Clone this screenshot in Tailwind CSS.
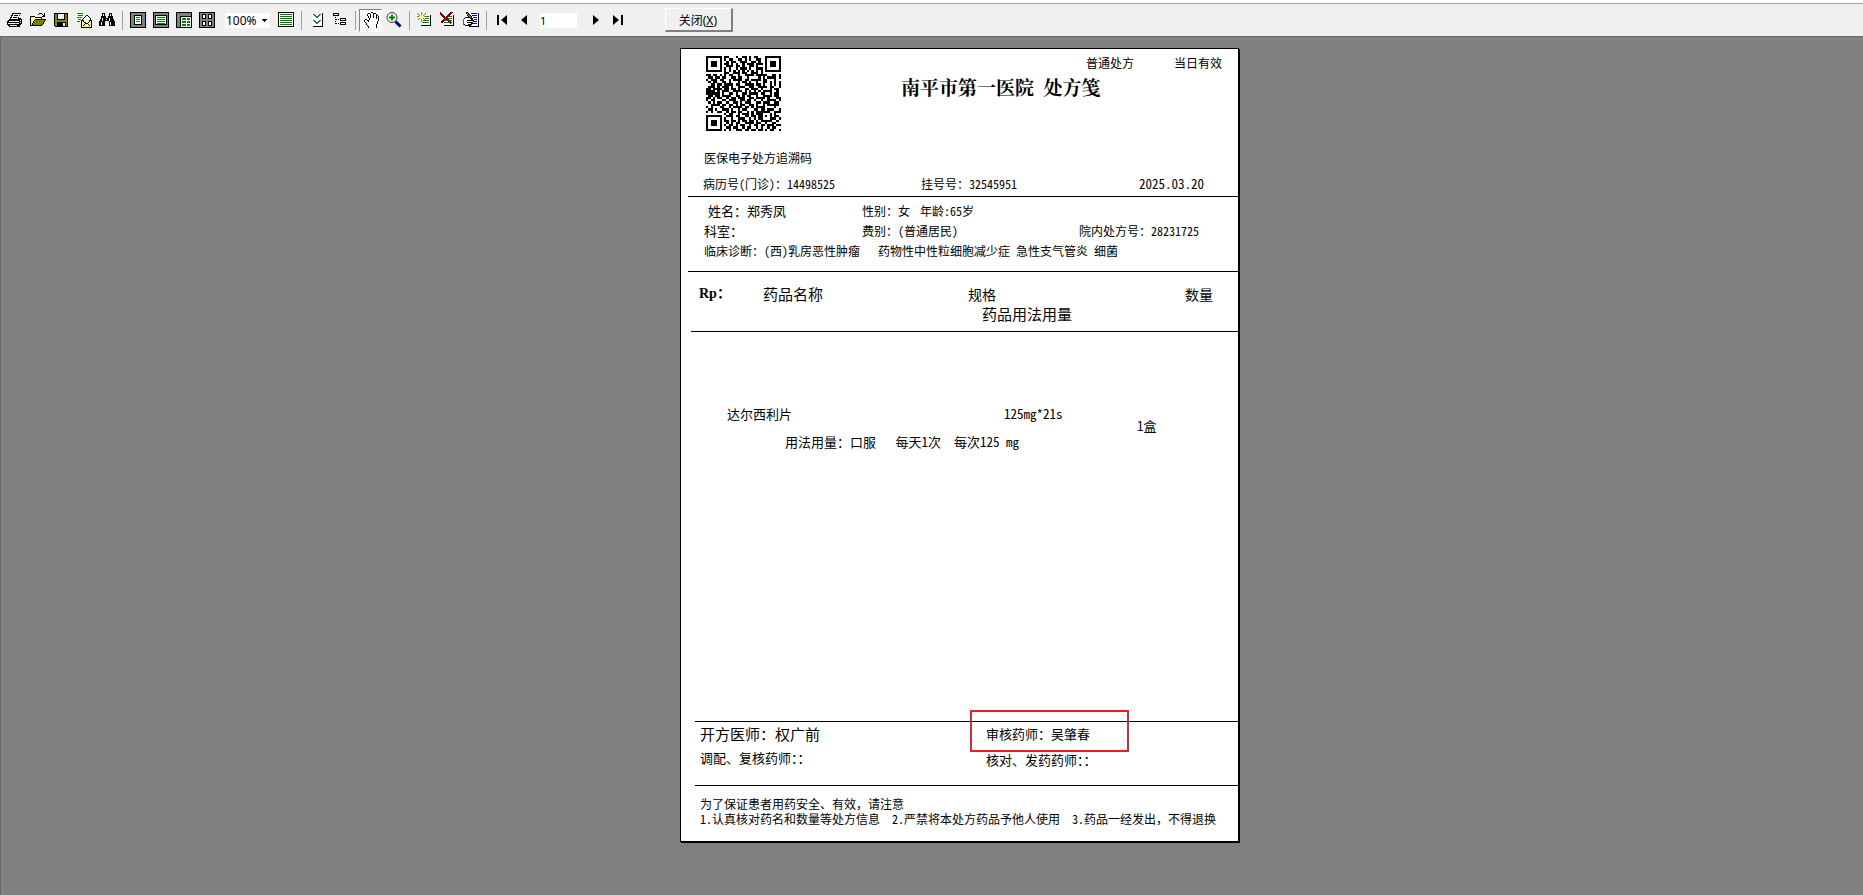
<!DOCTYPE html>
<html lang="zh-CN">
<head>
  <meta charset="UTF-8" />
  <meta name="viewport" content="width=device-width, initial-scale=1.0" />
  <title>处方笺 - 打印预览</title>
  <script src="https://cdn.jsdelivr.net/npm/@tailwindcss/browser@4"></script>
</head>
<body class="min-h-screen flex flex-col bg-[#808080] text-black font-['Noto_Sans_Mono_CJK_SC','Noto_Sans_CJK_SC',monospace]">

  <!-- Toolbar -->
  <header class="bg-white pt-[3px]">
    <div class="flex items-center h-[34px] pl-[3px] bg-[#f0f0f0] border-t border-t-[#a0a0a0] border-b border-b-[#696969]">
      <button aria-label="打印" class="w-[23px] h-[23px] pl-1">
        <svg class="size-4" viewBox="0 0 16 16" shape-rendering="crispEdges">
          <path d="M5 1h9v1h-1v2h-1v2h2v1h1v5h-1v1h-1v2H2v-1H1v-1H0V9h1V8h1V7h1V5h1V3h1z" fill="#000"/>
          <path d="M6 2h7v1h-1v2h-1v2H4V6h1V4h1zM2 9h10v1H2zM1 11h11v1H1zM13 8h1v1h-1zM13 10h1v1h-1zM3 13h7v1H3z" fill="#fff"/>
          <path d="M7 3h4v1H7zM6 5h4v1H6z" fill="#000"/>
          <path d="M8 11h2v1H8z" fill="#e0e000"/>
        </svg>
      </button>
      <button aria-label="打开" class="w-[23px] h-[23px] pl-1">
        <svg class="size-4" viewBox="0 0 16 16" shape-rendering="crispEdges">
          <path d="M0 4h4l1 1h6v3H5l-4 6H0z" fill="#ffff80"/>
          <path d="M.5 14V4.500h4l1 1h6v2" fill="none" stroke="#000"/>
          <path d="M1 14l4-6h11l-4 6z" fill="#808000"/>
          <path d="M5 7h11v1H5zM1 13h11v1H1zM4 8h1v1H4zM3 9h1v2H3zM2 11h1v2H2zM14 9h1v1h-1zM13 10h1v2h-1zM12 12h1v1h-1z" fill="#000"/>
          <path d="M8 2h1v1H8zM9 1h3v1H9zM12 2h1v1h-1zM14 1h1v4h-3V4h1V3h1z" fill="#000"/>
        </svg>
      </button>
      <button aria-label="保存" class="w-[23px] h-[23px] pl-1">
        <svg class="size-4" viewBox="0 0 16 16" shape-rendering="crispEdges">
          <path d="M1 1h14v14H2l-1-1z" fill="#000"/>
          <path d="M2 2h12v12H2z" fill="#808000"/>
          <path d="M4 1h8v7H4z" fill="#000"/>
          <path d="M5 2h6v5H5z" fill="#f0f0f0"/>
          <path d="M4 10h9v5H4z" fill="#000"/>
          <path d="M10 11h2v3h-2z" fill="#fff"/>
        </svg>
      </button>
      <button aria-label="发送邮件" class="w-[23px] h-[23px] pl-1">
        <svg class="size-4" viewBox="0 0 16 16" shape-rendering="crispEdges">
          <path d="M0 0h10v11H0z" fill="#fff"/>
          <path d="M1 1.500h6M2 3.500h5M1 5.500h5M2 7.500h3M1 9.500h3" stroke="#008000"/>
          <path d="M10 3h2v1h1v1h1v1h1v2h1v8H5V8h1V7h1V6h1V5h1V4h1z" fill="#000"/>
          <path d="M10 4h2v1h1v1h1v2h-1v2h-1v1h-2v-1H8V8H7V7h1V6h1V5h1z" fill="#fff"/>
          <path d="M6 9h1v1h1v1h1v1h3v-1h1v-1h1V9h1v6H6z" fill="#ffff80"/>
          <path d="M7 13h1v1H7zM8 12h1v1H8zM12 12h1v1h-1zM13 13h1v1h-1z" fill="#000"/>
        </svg>
      </button>
      <button aria-label="查找" class="w-[23px] h-[23px] pl-1">
        <svg class="size-4" viewBox="0 0 16 16" shape-rendering="crispEdges">
          <path d="M3 1h3v3h1v2h2V4h1V1h3v3h1v3h1v2h1v5h-6V9H6v5H0V9h1V7h1V4h1z" fill="#000"/>
          <path d="M4 2h1v2H4zM11 2h1v2h-1zM3 6h1v3H3zM10 6h1v3h-1zM2 10h1v3H2zM11 10h1v3h-1zM7 7h1v1H7z" fill="#fff"/>
        </svg>
      </button>

      <div class="w-2 h-[19px] pl-1"><div class="w-px h-full bg-[#a0a0a0]"></div></div>

      <button aria-label="整页" class="w-[23px] h-[23px] pl-1">
        <svg class="size-4" viewBox="0 0 16 16" shape-rendering="crispEdges">
          <rect x=".5" y=".5" width="15" height="15" rx="1" fill="#808080" stroke="#000"/>
          <rect x="4.500" y="3.500" width="7" height="9" fill="#fff" stroke="#000"/>
          <path d="M6 5.500h4M6 7.500h4M6 9.500h4" stroke="#008000"/>
        </svg>
      </button>
      <button aria-label="页宽" class="w-[23px] h-[23px] pl-1">
        <svg class="size-4" viewBox="0 0 16 16" shape-rendering="crispEdges">
          <rect x=".5" y=".5" width="15" height="15" rx="1" fill="#808080" stroke="#000"/>
          <rect x="2.500" y="3.500" width="11" height="9" fill="#fff" stroke="#000"/>
          <path d="M4 5.500h8M4 7.500h8M4 9.500h8M4 11.500h8" stroke="#008000"/>
        </svg>
      </button>
      <button aria-label="双页" class="w-[23px] h-[23px] pl-1">
        <svg class="size-4" viewBox="0 0 16 16" shape-rendering="crispEdges">
          <rect x=".5" y=".5" width="15" height="15" rx="1" fill="#808080" stroke="#000"/>
          <path d="M4.500 15V4.500H15" fill="#fff" stroke="#000"/>
          <path d="M5 5h10v10H5z" fill="#fff"/>
          <path d="M6 6h4v2H6zM11 6h3v2h-3zM6 9h4v2H6zM11 9h3v2h-3zM6 12h4v2H6zM11 12h3v2h-3z" fill="#008000"/>
        </svg>
      </button>
      <button aria-label="多页" class="w-[23px] h-[23px] pl-1">
        <svg class="size-4" viewBox="0 0 16 16" shape-rendering="crispEdges">
          <rect x=".5" y=".5" width="15" height="15" rx="1" fill="#808080" stroke="#000"/>
          <path d="M3.500 2.500h3v4h-3zM9.500 2.500h3v4h-3zM3.500 9.500h3v4h-3zM9.500 9.500h3v4h-3z" fill="#fff" stroke="#000"/>
        </svg>
      </button>

      <div class="relative w-[45px] ml-[7px] mr-1">
        <select aria-label="缩放" class="block w-full h-[15px] bg-white pl-px appearance-none font-['Noto_Sans'] text-[12px] leading-[15px]">
          <option>100%</option>
        </select>
        <svg class="absolute right-[3px] top-[6px] w-[5px] h-[3px] pointer-events-none" viewBox="0 0 5 3" shape-rendering="crispEdges"><path d="M0 0h5v1H4v1H3v1H2V2H1V1H0z"/></svg>
      </div>

      <button aria-label="页面设置" class="w-[23px] h-[23px] pl-1">
        <svg class="size-4" viewBox="0 0 16 16" shape-rendering="crispEdges">
          <rect x=".5" y=".5" width="15" height="14" rx="1" fill="#fff" stroke="#000"/>
          <path d="M2 2.500h12M2 4.500h12M2 6.500h12M2 8.500h12M2 10.500h12M2 12.500h12" stroke="#008000"/>
        </svg>
      </button>

      <div class="w-2 h-[19px] pl-1"><div class="w-px h-full bg-[#a0a0a0]"></div></div>

      <button aria-label="展开" class="w-[23px] h-[23px] pl-1">
        <svg class="size-4" viewBox="0 0 16 16" shape-rendering="crispEdges">
          <path d="M3 1h10v13H3z" fill="#fff"/>
          <path d="M13.500 1v13.500H4" fill="none" stroke="#000"/>
          <path d="M4 2h2v1h1v1h2V3h1V2h2v1h-1v1h-1v1H9v1H7V5H6V4H5V3H4zM4 8h2v1h1v1h2V9h1V8h2v1h-1v1h-1v1H9v1H7v-1H6v-1H5V9H4z" fill="#208040"/>
        </svg>
      </button>
      <button aria-label="大纲" class="w-[23px] h-[23px] pl-1">
        <svg class="size-4" viewBox="0 0 16 16" shape-rendering="crispEdges">
          <path d="M1.500 1.500h5v2h-5zM8.500 6.500h5v2h-5zM8.500 10.500h5v2h-5z" fill="#fff" stroke="#000"/>
          <path d="M3.500 5v7M4 7.500h4M4 11.500h4" stroke="#000" stroke-dasharray="1 1"/>
        </svg>
      </button>

      <div class="w-2 h-[19px] pl-1"><div class="w-px h-full bg-[#a0a0a0]"></div></div>

      <button aria-label="抓手" aria-pressed="true" class="w-[23px] h-[23px] pl-1 bg-[#f8f8f8] border-t border-l border-t-[#808080] border-l-[#808080] border-b border-r border-b-white border-r-white">
        <svg class="size-4" viewBox="0 0 16 16" shape-rendering="crispEdges">
          <path d="M4 15v-2H3v-1H2v-2H1V9H0V7h3v1h1V6H3V4H2V2h2V1h2v1h1V0h3v1h2v1h1v2h2v1h1v4h-1v3h-1v3h-1v1H4z" fill="#fff"/>
          <path d="M7 0h2v1H7zM4 1h2v1H4zM9 1h1v1H9zM10 1h2v1h-2zM3 2h1v2H3zM6 2h1v4H6zM12 2h1v2h-1zM9 2h1v4H9zM4 4h1v2H4zM13 3h1v1h-1zM14 4h1v5h-1zM12 4h1v3h-1zM5 6h1v2H5zM4 8h1v2H4zM1 7h2v1H1zM0 8h1v2H0zM3 8h1v1H3zM1 10h1v1H1zM2 11h1v2H2zM3 13h1v1H3zM4 14h1v2H4zM13 9h1v3h-1zM12 12h1v4h-1z" fill="#000"/>
        </svg>
      </button>
      <button aria-label="放大" class="w-[23px] h-[23px] pl-1">
        <svg class="size-4" viewBox="0 0 16 16">
          <path d="M9.500 9.500l5 5" stroke="#000080" stroke-width="3"/>
          <circle cx="6" cy="5.500" r="5" fill="#fff" stroke="#333"/>
          <path d="M3 5.500h6M6 2.500v6" stroke="#008000" stroke-width="2"/>
        </svg>
      </button>

      <div class="w-2 h-[19px] pl-1"><div class="w-px h-full bg-[#a0a0a0]"></div></div>

      <button aria-label="添加页" class="w-[23px] h-[23px] pl-1">
        <svg class="size-4" viewBox="0 0 16 16" shape-rendering="crispEdges">
          <path d="M4 3h9v10H4z" fill="#fff"/>
          <path d="M13.500 3v10.500H4" fill="none" stroke="#000"/>
          <path d="M9 4.500h3M8 6.500h4M6 8.500h6M5 10.500h7" stroke="#008000"/>
          <path d="M0 1h1v1H0zM1 2h1v1H1zM2 3h1v1H2zM8 1h1v1H8zM7 2h1v1H7zM6 3h1v1H6zM4 0h1v3H4zM0 4h2v1H0zM7 4h2v1H7zM2 6h1v1H2zM1 7h1v1H1zM6 6h1v1H6zM7 7h1v1H7zM4 7h1v3H4z" fill="#808040"/>
          <path d="M3 3h3v1h1v1H6v1H3V5H2V4h1z" fill="#ffff40"/>
        </svg>
      </button>
      <button aria-label="删除页" class="w-[23px] h-[23px] pl-1">
        <svg class="size-4" viewBox="0 0 16 16" shape-rendering="crispEdges">
          <path d="M3 3h10v10H3z" fill="#fff"/>
          <path d="M13.500 3v10.500H4" fill="none" stroke="#000"/>
          <path d="M8 4.500h4M7 6.500h5M4 8.500h8M4 10.500h8" stroke="#008000"/>
          <path d="M0 1l11 10M12 0L1 11" stroke="#800000" stroke-width="2"/>
        </svg>
      </button>
      <button aria-label="编辑页" class="w-[23px] h-[23px] pl-1">
        <svg class="size-4" viewBox="0 0 16 16" shape-rendering="crispEdges">
          <path d="M5 1h10v13H5z" fill="#fff"/>
          <path d="M15.500 1v13.500H6" fill="none" stroke="#000"/>
          <path d="M8 1.500h6M9 3.500h5M10 5.500h4M11 7.500h3M11 9.500h3M9 11.500h5" stroke="#0000a0"/>
          <path d="M2 5h6v1h1v1h1v2h1v2h-2v2H8v1H2v-1H1V6h1z" fill="#fff"/>
          <path d="M3 0h2v1h1v1h1v1h1v1h1v2h1v2H8V7H7V6H6V5H5V4H4V2H3z" fill="#000"/>
          <path d="M4 1h1v1h1v1h1v1h1v2H7V5H6V4H5V3H4z" fill="#408040"/>
          <path d="M2 5h4v1H2zM1 6h1v1H1zM4 8h5v1H4zM9 8h2v1H9zM10 9h1v1h-1zM4 10h6v1H4zM5 12h4v1H5zM2 13h6v1H2zM1 12h1v1H1zM8 11h1v1H8z" fill="#000"/>
          <path d="M0 7h1v6H0z" fill="#00a000"/>
        </svg>
      </button>

      <div class="w-2 h-[19px] pl-1"><div class="w-px h-full bg-[#a0a0a0]"></div></div>

      <button aria-label="首页" class="w-[23px] h-[23px] pl-1">
        <svg class="size-4" viewBox="0 0 16 16"><path d="M3 3h2v10H3zM13 3v10L7 8z"/></svg>
      </button>
      <button aria-label="上一页" class="w-[23px] h-[23px] pl-1">
        <svg class="size-4" viewBox="0 0 16 16"><path d="M10 3v10L4 8z"/></svg>
      </button>
      <input type="text" aria-label="页码" value="1" class="w-[37px] h-[15px] ml-1 mr-2 bg-white font-['Noto_Sans'] text-[11px] leading-[15px]" />
      <button aria-label="下一页" class="w-[23px] h-[23px] pl-1">
        <svg class="size-4" viewBox="0 0 16 16"><path d="M4 3v10l6-5z"/></svg>
      </button>
      <button aria-label="末页" class="w-[23px] h-[23px] pl-1">
        <svg class="size-4" viewBox="0 0 16 16"><path d="M1 3v10l6-5zM9 3h2v10H9z"/></svg>
      </button>

      <button class="w-[68px] h-6 ml-[34px] bg-[#f0f0f0] border-t border-l border-r-2 border-b-2 border-t-white border-l-white border-r-[#808080] border-b-[#808080] pt-0.5 pr-[14px] font-['Noto_Sans','Noto_Sans_CJK_SC',sans-serif] text-[12px] leading-4 text-right">关闭(<u>X</u>)</button>
    </div>
  </header>

  <!-- Preview area -->
  <main class="grow flex justify-center items-start pl-[55px] pt-[11px] pb-[52px] border-l border-l-[#696969]">
    <article class="w-[559px] bg-white border border-black shadow-[1px_1px_0_#000] text-[12px] leading-4">

      <!-- Heading -->
      <section class="ml-[7px] h-[148px] border-b border-black">
        <div class="flex h-[101px]">
          <svg id="qr" class="size-[75px] mt-[7px] ml-[18px]" viewBox="0 0 33 33" shape-rendering="crispEdges" role="img" aria-label="医保电子处方追溯码"></svg>
          <div class="grow pl-[120px] pt-[6px]">
            <div class="flex justify-end gap-10 pr-4">
              <span>普通处方</span>
              <span>当日有效</span>
            </div>
            <h1 class="mt-1 whitespace-pre font-['Noto_Serif_CJK_SC','Noto_Sans_CJK_SC',serif] text-[19px] leading-6 font-bold">南平市第一医院  处方笺</h1>
          </div>
        </div>
        <p class="pl-4">医保电子处方追溯码</p>
        <div class="grid grid-cols-[218px_218px_1fr] pl-[15px] mt-[10px]">
          <span>病历号(门诊)：14498525</span>
          <span>挂号号：32545951</span>
          <span class="text-[13px]">2025.03.20</span>
        </div>
      </section>

      <!-- Patient -->
      <section class="ml-[7px] h-[75px] border-b border-black pt-[6px] pl-4">
        <div class="grid grid-cols-[158px_1fr] mb-1">
          <span class="pl-1 text-[13px]">姓名：郑秀凤</span>
          <div class="flex gap-[10px]"><span>性别：女</span><span>年龄:65岁</span></div>
        </div>
        <div class="grid grid-cols-[158px_217px_1fr] mb-1">
          <span class="text-[13px]">科室：</span>
          <span>费别：(普通居民)</span>
          <span>院内处方号：28231725</span>
        </div>
        <p class="whitespace-pre">临床诊断：(西)乳房恶性肿瘤   药物性中性粒细胞减少症 急性支气管炎 细菌</p>
      </section>

      <!-- Column titles -->
      <section class="ml-[10px] h-[60px] border-b border-black pt-3 pl-2">
        <div class="grid grid-cols-[64px_205px_217px_1fr] text-[14px] leading-5">
          <b class="font-['Liberation_Serif','Noto_Sans_CJK_SC',serif]">Rp：</b>
          <span class="text-[15px]">药品名称</span>
          <span>规格</span>
          <span>数量</span>
        </div>
        <p class="pl-[283px] text-[15px] leading-[19px]">药品用法用量</p>
      </section>

      <!-- Drug -->
      <section class="ml-[14px] h-[390px] border-b border-black pt-[74px] pl-8 text-[13px]">
        <div class="grid grid-cols-[277px_133px_1fr]">
          <span>达尔西利片</span>
          <span>125mg*21s</span>
          <span class="pt-3">1盒</span>
        </div>
        <div class="flex pl-[58px] whitespace-pre"><span>用法用量：口服   </span><span>每天1次  </span><span>每次125 mg</span></div>
      </section>

      <!-- Signatures -->
      <section class="relative grid grid-cols-[286px_1fr] ml-[14px] h-16 border-b border-black pt-1 pl-[5px] text-[13px]">
        <div>
          <p class="text-[15px]">开方医师：权广前</p>
          <p class="mt-2">调配、复核药师：：</p>
        </div>
        <div>
          <p>审核药师：吴肇春</p>
          <p class="mt-[10px]">核对、发药药师：：</p>
        </div>
        <!-- highlight around the reviewing pharmacist -->
        <div class="absolute left-[275px] -top-3 w-[159px] h-[42px] border-2 border-[#ed1c24] border-l-[#c9303a] border-r-[#b03a40]"></div>
      </section>

      <!-- Notes -->
      <footer class="ml-[14px] h-[55px] pt-[10px] pl-[5px] leading-[15px] whitespace-nowrap">
        <p>为了保证患者用药安全、有效，请注意</p>
        <p class="whitespace-pre">1.认真核对药名和数量等处方信息  2.严禁将本处方药品予他人使用  3.药品一经发出，不得退换</p>
      </footer>
    </article>
  </main>

  <script>
    // QR modules, one string per row
    const rows = [
      '#######.##...#..##.#.##...#######',
      '#.....#.#.##..##.#.#..##..#.....#',
      '#.###.#..#.##..###..##.#..#.###.#',
      '#.###.#.##.#.#..#.###.###.#.###.#',
      '#.###.#..###.##.#..##.#...#.###.#',
      '#.....#.#.#..#.###.#..###.#.....#',
      '#######.#.#.#.#.#.#.#.#.#.#######',
      '........##..###.##..###.#........',
      '##.##.#.#.##..#..####.#####..##.#',
      '.##.##.##..##.##..#....#.#.####.#',
      '#.###.##..#.####.##.####.##...#..',
      '.#.##..##.#...#.##.#..#..##.#.#.#',
      '..##.##.####.##..####.##.#..#.#.#',
      '.###.#.###.#..###..##..####.##..#',
      '##.####.##.##.#..##.###.#...#.##.',
      '####.#.###..####.#.#.#.#.####..#.',
      '######.#..##.#..##.####.##..#.##.',
      '.##.##.####..##.#.##..#..####.##.',
      '##.#.##..#.##.###..##.####.#...##',
      '#.##...##.###..##.##.#..#..####.#',
      '.#.#.##..#..##.#.###..##.###..##.',
      '..####.##.##.#.##..##.#..#.#####.',
      '#.#...##..#.####.##.#.####....#..',
      '.##.#..###.#..#.##...##.##.###..#',
      '#.#..##..#.##.##..#.#.######..###',
      '........#.##..#.###.#.###...#.#..',
      '#######..###.##..##.##.##.#.#.##.',
      '#.....#.#..#..###..#.#.##...###.#',
      '#.###.#.##.##.#.##.##.#.#####..#.',
      '#.###.#..#.#.##..####.##..#..##..',
      '#.###.#.#.##.#.##..#.##.##.###.##',
      '#.....#..##.##..#.##..#.#..#.##..',
      '#######.#.#..###.##.##.##.#.##..#'
    ];
    let d = '';
    rows.forEach((row, y) => {
      [...row].forEach((cell, x) => {
        if (cell === '#') d += `M${x} ${y}h1v1h-1z`;
      });
    });
    document.getElementById('qr').innerHTML = `<path d="${d}"/>`;
  </script>

</body>
</html>
